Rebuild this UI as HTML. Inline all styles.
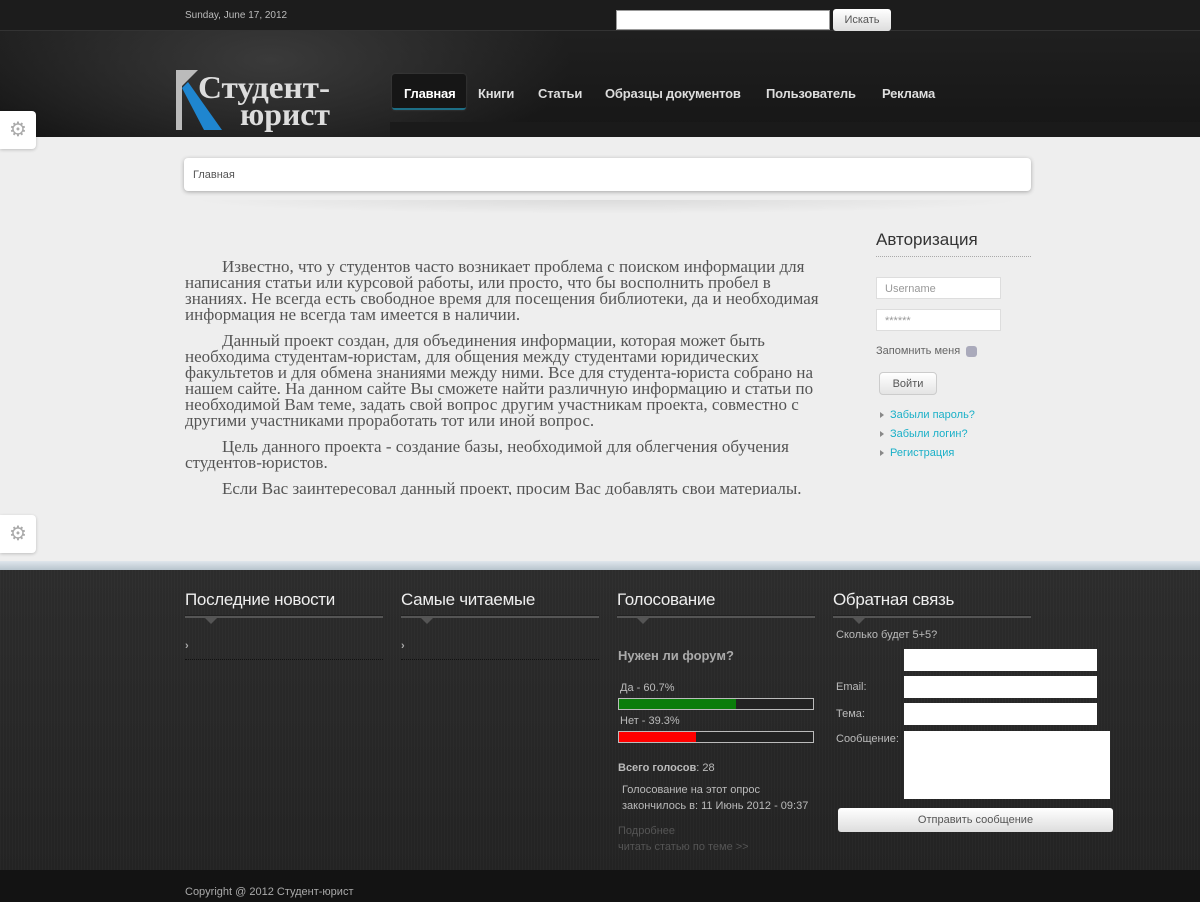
<!DOCTYPE html>
<html><head><meta charset="utf-8"><style>
*{margin:0;padding:0;box-sizing:border-box}
body{width:1200px;height:896px;overflow:hidden;background:#eeeeee;font-family:"Liberation Sans","Noto Sans CJK SC",sans-serif;position:relative}
.top{position:absolute;left:0;top:0;width:1200px;height:137px;background:radial-gradient(ellipse 300px 120px at 270px 60px,#3a3a3a,transparent),linear-gradient(#222,#161616);}
.topbar{position:absolute;left:0;top:0;width:1200px;height:31px;background:#1c1c1c;border-bottom:1px solid #333}
.date{position:absolute;left:185px;top:10px;font-size:10px;color:#bbb}
.sin{position:absolute;left:616px;top:10px;width:214px;height:20px;background:#fff;border:1px solid #999}
.sbtn{position:absolute;left:833px;top:9px;width:58px;height:22px;background:linear-gradient(#fff,#ddd);border-radius:3px;font-size:11px;color:#555;text-align:center;line-height:22px}
.navstrip{position:absolute;left:390px;top:122px;width:810px;height:15px;background:#1a1a1a}
.nav{position:absolute;left:392px;top:74px;height:36px;font-size:13px;font-weight:bold;color:#ddd}
.nav span{position:absolute;top:12px;white-space:nowrap;letter-spacing:-0.2px}
.act{position:absolute;left:0;top:0;width:74px;height:36px;background:#161616;border-radius:3px;box-shadow:0 0 2px #444;border-bottom:2px solid #1d6f86}
.gear{position:absolute;left:0;width:36px;height:38px;background:#fff;border-radius:0 4px 4px 0;box-shadow:0 1px 3px rgba(0,0,0,.2);color:#aaa;font-size:20px;text-align:center;line-height:38px}
.bc{position:absolute;left:184px;top:158px;width:847px;height:33px;background:#fff;border-radius:4px;box-shadow:0 1px 4px rgba(0,0,0,.3);font-size:11px;color:#555;padding:11px 9px}
.art{position:absolute;left:185px;top:259px;width:656px;height:236px;overflow:hidden;font-family:"Liberation Serif",serif;font-size:17px;line-height:16px;color:#555}
.art p{text-indent:37px;margin-bottom:10px}
.side{position:absolute;left:876px;top:230px;width:155px}
.side h3{font-size:17px;font-weight:normal;color:#333;padding-bottom:6px;border-bottom:1px dotted #aaa}
.inp{width:125px;height:22px;background:#fff;border:1px solid #ddd;font-size:11px;color:#999;padding:5px 8px;margin-top:0}
.lnk{font-size:11px;color:#1ab0c8;margin-left:4px;height:19px}
.lnk:before{content:"";display:inline-block;border-left:4px solid #888;border-top:3px solid transparent;border-bottom:3px solid transparent;margin-right:6px}
.sep{position:absolute;left:0;top:561px;width:1200px;height:9px;background:linear-gradient(#dfe6ec,#b8c4cd)}
.foot{position:absolute;left:0;top:570px;width:1200px;height:300px;background:repeating-linear-gradient(90deg,rgba(255,255,255,.02) 0 1px,transparent 1px 3px),linear-gradient(#2c2c2c,#232323)}
.bot{position:absolute;left:0;top:870px;width:1200px;height:26px;background:#131313;font-size:11px;color:#aaa;padding:16px 185px}
.fh{position:absolute;top:590px;font-size:17px;color:#eee;letter-spacing:-0.3px}
.fl{position:absolute;top:615px;width:198px;height:3px;background:#555;border-top:1px solid #222}
.fl:after{content:"";position:absolute;left:20px;top:2px;border-left:6px solid transparent;border-right:6px solid transparent;border-top:6px solid #555}
.fi{position:absolute;top:640px;width:198px;height:20px;border-bottom:1px dotted #111;color:#aaa;font-size:11px;font-weight:bold}
.t{position:absolute;font-size:11px;color:#bbb;white-space:nowrap}
.bar{position:absolute;left:618px;width:196px;height:12px;border:1px solid #bbb;background:#222}
.w{position:absolute;background:#fff}
</style></head><body>
<div class="top"></div>
<div class="topbar"></div>
<div class="date">Sunday, June 17, 2012</div>
<div class="sin"></div><div class="sbtn">Искать</div>
<svg style="position:absolute;left:174px;top:68px" width="165" height="64" viewBox="0 0 165 64">
<polygon points="2,2 24,2 8,18 8,62 2,62" fill="#bbb"/>
<polygon points="8,20 14,14 48,62 30,62" fill="#1f86d0"/>
<text x="24" y="30" font-family="Liberation Serif,serif" font-weight="bold" font-size="32" fill="#ddd" textLength="132" lengthAdjust="spacingAndGlyphs">Студент-</text>
<text x="66" y="57" font-family="Liberation Serif,serif" font-weight="bold" font-size="32" fill="#ddd" textLength="90" lengthAdjust="spacingAndGlyphs">юрист</text>
</svg>
<div class="navstrip"></div>
<div class="nav"><div class="act"></div>
<span style="left:12px;color:#fff">Главная</span><span style="left:86px">Книги</span><span style="left:146px">Статьи</span><span style="left:213px">Образцы документов</span><span style="left:374px">Пользователь</span><span style="left:490px">Реклама</span></div>
<div class="gear" style="top:111px">⚙</div>
<div class="gear" style="top:515px">⚙</div>
<div class="bc">Главная</div>
<div style="position:absolute;left:184px;top:200px;width:847px;height:14px;background:radial-gradient(ellipse at top,rgba(0,0,0,.08),transparent 70%)"></div>
<div class="art">
<p>Известно, что у студентов часто возникает проблема с поиском информации для написания статьи или курсовой работы, или просто, что бы восполнить пробел в<br>знаниях. Не всегда есть свободное время для посещения библиотеки, да и необходимая информация не всегда там имеется в наличии.</p>
<p>Данный проект создан, для объединения информации, которая может быть необходима студентам-юристам, для общения между студентами юридических факультетов и для обмена знаниями между ними. Все для студента-юриста собрано на нашем сайте. На данном сайте Вы сможете найти различную информацию и статьи по необходимой Вам теме, задать свой вопрос другим участникам проекта, совместно с другими участниками проработать тот или иной вопрос.</p>
<p>Цель данного проекта - создание базы, необходимой для облегчения обучения студентов-юристов.</p>
<p>Если Вас заинтересовал данный проект, просим Вас добавлять свои материалы.</p>
</div>
<div class="side">
<h3>Авторизация</h3>
<div class="inp" style="margin-top:20px">Username</div>
<div class="inp" style="margin-top:10px">******</div>
<div style="font-size:11px;color:#666;margin-top:14px">Запомнить меня <span style="display:inline-block;width:11px;height:11px;border-radius:3px;background:#aab;vertical-align:middle;margin-left:3px"></span></div>
<div style="margin:15px 0 0 3px;width:58px;height:23px;border:1px solid #ccc;border-radius:4px;background:linear-gradient(#fff,#e4e4e4);font-size:11px;color:#555;text-align:center;line-height:22px">Войти</div>
<div style="margin-top:14px"><div class="lnk">Забыли пароль?</div><div class="lnk">Забыли логин?</div><div class="lnk">Регистрация</div></div>
</div>
<div class="sep"></div>
<div class="foot"></div>
<div class="fh" style="left:185px">Последние новости</div><div class="fl" style="left:185px"></div><div class="fi" style="left:185px">›</div>
<div class="fh" style="left:401px">Самые читаемые</div><div class="fl" style="left:401px"></div><div class="fi" style="left:401px">›</div>
<div class="fh" style="left:617px">Голосование</div><div class="fl" style="left:617px"></div>
<div class="fh" style="left:833px">Обратная связь</div><div class="fl" style="left:833px"></div>
<div class="t" style="left:618px;top:648px;font-size:13px;font-weight:bold;color:#aaa">Нужен ли форум?</div>
<div class="t" style="left:620px;top:682px">Да - 60.7%</div>
<div class="bar" style="top:698px"><div style="width:117px;height:10px;background:#0a7d0a"></div></div>
<div class="t" style="left:620px;top:715px">Нет - 39.3%</div>
<div class="bar" style="top:731px"><div style="width:77px;height:10px;background:#f00"></div></div>
<div class="t" style="left:618px;top:762px"><b>Всего голосов</b>: 28</div>
<div class="t" style="left:622px;top:782px;line-height:16px">Голосование на этот опрос<br>закончилось в: 11 Июнь 2012 - 09:37</div>
<div class="t" style="left:618px;top:823px;color:#555;line-height:16px">Подробнее<br>читать статью по теме &gt;&gt;</div>
<div class="t" style="left:836px;top:629px">Сколько будет 5+5?</div>
<div class="w" style="left:904px;top:649px;width:193px;height:22px"></div>
<div class="t" style="left:836px;top:681px">Email:</div>
<div class="w" style="left:904px;top:676px;width:193px;height:22px"></div>
<div class="t" style="left:836px;top:708px">Тема:</div>
<div class="w" style="left:904px;top:703px;width:193px;height:22px"></div>
<div class="t" style="left:836px;top:733px">Сообщение:</div>
<div class="w" style="left:904px;top:731px;width:206px;height:68px"></div>
<div style="position:absolute;left:838px;top:808px;width:275px;height:24px;border-radius:3px;background:linear-gradient(#fff,#ddd);font-size:11px;color:#555;text-align:center;line-height:25px">Отправить сообщение</div>
<div class="bot">Copyright @ 2012 Студент-юрист</div>
</body></html>
